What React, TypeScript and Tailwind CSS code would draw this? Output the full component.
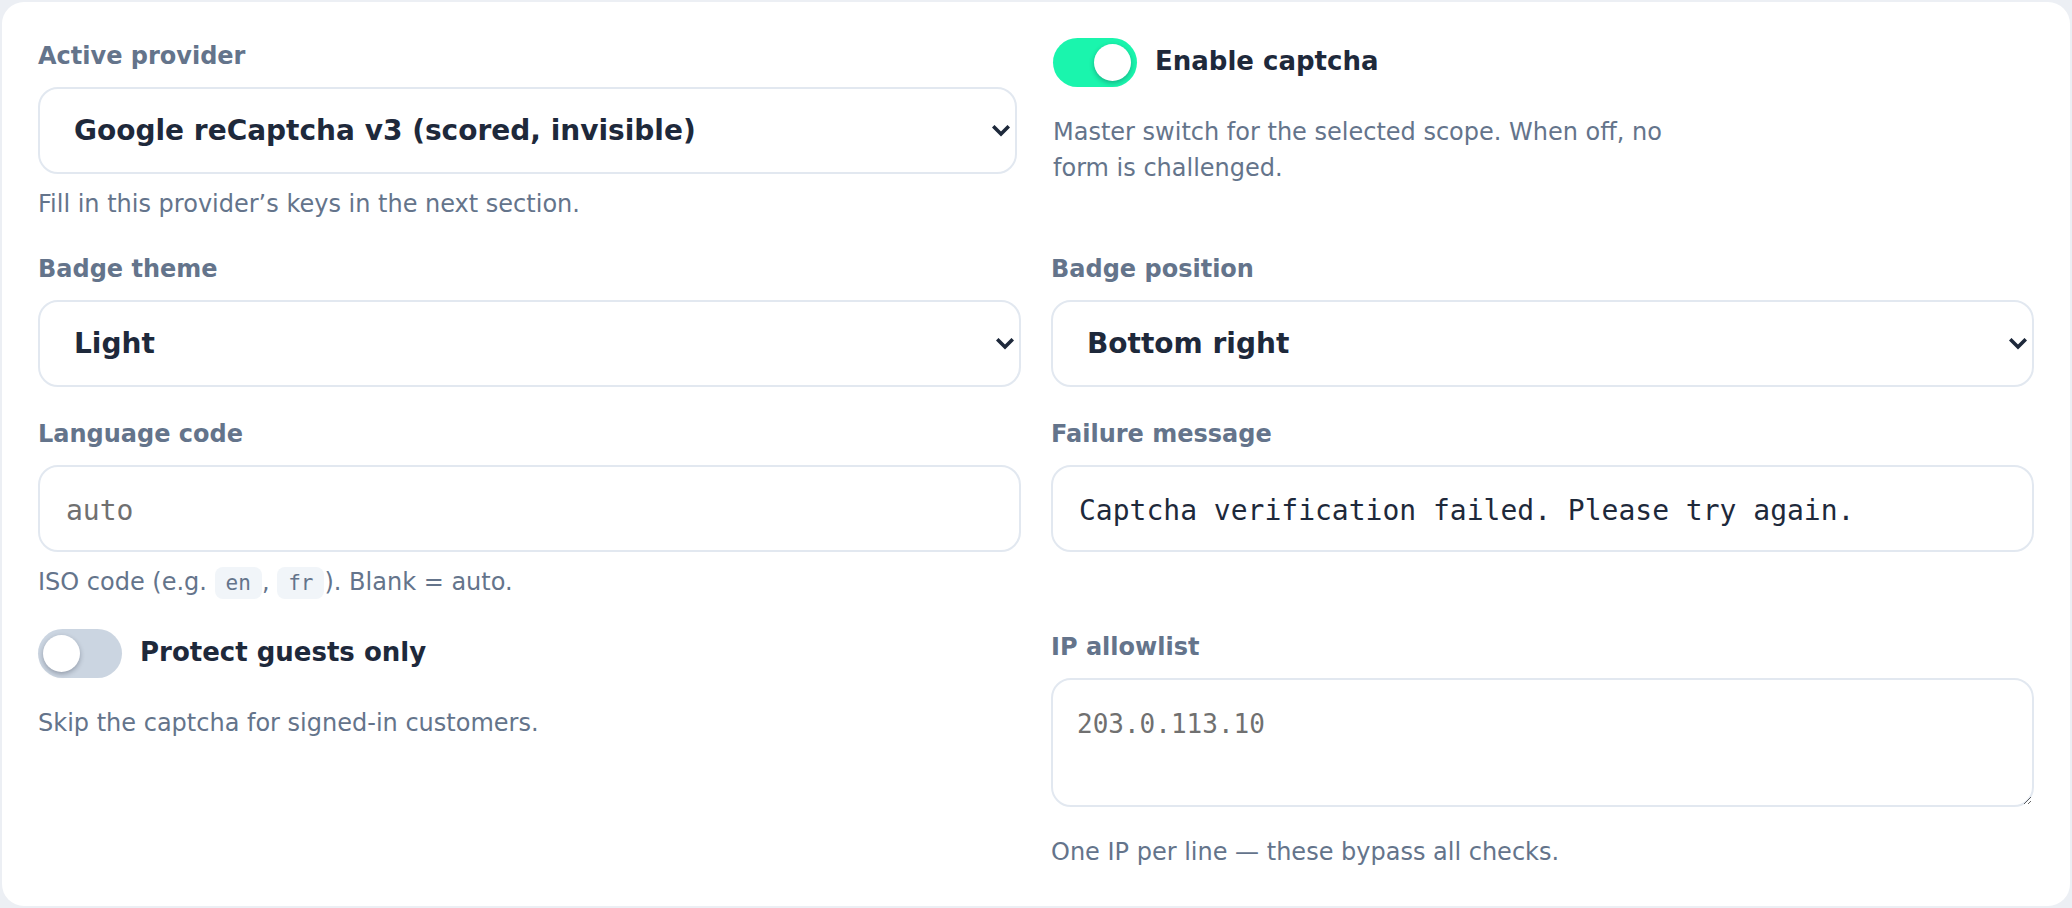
import React from "react";

const sans = { fontFamily: '"DejaVu Sans", "Noto Sans", sans-serif' };
const mono = { fontFamily: '"DejaVu Sans Mono", monospace' };

function Chevron() {
  return (
    <svg width="18" height="12" viewBox="0 0 18 12" className="pointer-events-none absolute right-[5px] top-1/2 -translate-y-1/2">
      <path d="M2.5 2.5 L9 9 L15.5 2.5" fill="none" stroke="#1e293b" strokeWidth="3.6" strokeLinecap="square" />
    </svg>
  );
}

function Label({ children }: { children: React.ReactNode }) {
  return <div className="text-[24px] leading-[30px] font-bold text-[#64748b]">{children}</div>;
}

function Help({ children, className = "" }: { children: React.ReactNode; className?: string }) {
  return <div className={"text-[24px] leading-[36px] text-[#64748b] " + className}>{children}</div>;
}

function Select({ value, className = "" }: { value: string; className?: string }) {
  return (
    <div className={"relative mt-[16px] h-[87px] rounded-[20px] border-2 border-[#e2e8f0] bg-white flex items-center pl-[34px] " + className}>
      <span className="text-[28px] font-bold text-[#1e293b]">{value}</span>
      <Chevron />
    </div>
  );
}

function Toggle({ on }: { on: boolean }) {
  return (
    <div className={"relative h-[49px] w-[84px] shrink-0 rounded-full " + (on ? "bg-[#1af5ad]" : "bg-[#cbd5e1]")}>
      <div
        className={
          "absolute top-[6px] h-[37px] w-[37px] rounded-full bg-white shadow-[0_2px_5px_rgba(15,23,42,0.3)] " +
          (on ? "right-[6px]" : "left-[5px]")
        }
      />
    </div>
  );
}

function Code({ children }: { children: React.ReactNode }) {
  return (
    <span
      className="inline-block rounded-[8px] bg-[#f1f5f9] px-[11px] text-[21px] leading-[32px] text-[#64748b] align-middle"
      style={mono}
    >
      {children}
    </span>
  );
}

export default function App() {
  return (
    <div className="h-[908px] w-full bg-[#eceff4] p-[2px]" style={sans}>
      <div className="h-full w-full rounded-[22px] bg-white px-[36px] pt-[36px]">
        <div className="grid grid-cols-2 gap-x-[30px] gap-y-[32px]">
          {/* Row 1 */}
          <div className="pt-[3px]">
            <Label>Active provider</Label>
            <Select value="Google reCaptcha v3 (scored, invisible)" className="mr-[4px]" />
            <Help className="mt-[12px]">Fill in this provider’s keys in the next section.</Help>
          </div>
          <div className="pl-[2px]">
            <div className="flex items-center gap-[18px]">
              <Toggle on />
              <span className="-mt-[2px] text-[26px] font-bold text-[#1e293b]">Enable captcha</span>
            </div>
            <Help className="mt-[27px] max-w-[640px]">
              Master switch for the selected scope. When off, no form is challenged.
            </Help>
          </div>

          {/* Row 2 */}
          <div>
            <Label>Badge theme</Label>
            <Select value="Light" />
          </div>
          <div>
            <Label>Badge position</Label>
            <Select value="Bottom right" />
          </div>

          {/* Row 3 */}
          <div>
            <Label>Language code</Label>
            <input
              className="mt-[16px] block h-[87px] w-full rounded-[20px] border-2 border-[#e2e8f0] bg-white px-[26px] pt-[3px] text-[28px] text-[#1e293b] placeholder:text-[#707070] outline-none"
              style={mono}
              placeholder="auto"
              readOnly
            />
            <Help className="mt-[12px]">
              ISO code (e.g. <Code>en</Code>, <Code>fr</Code>). Blank = auto.
            </Help>
          </div>
          <div>
            <Label>Failure message</Label>
            <input
              className="mt-[16px] block h-[87px] w-full rounded-[20px] border-2 border-[#e2e8f0] bg-white px-[26px] pt-[3px] text-[28px] text-[#1e293b] outline-none"
              style={mono}
              value="Captcha verification failed. Please try again."
              readOnly
            />
          </div>

          {/* Row 4 */}
          <div className="-mt-[3px]">
            <div className="flex items-center gap-[18px]">
              <Toggle on={false} />
              <span className="-mt-[2px] text-[26px] font-bold text-[#1e293b]">Protect guests only</span>
            </div>
            <Help className="mt-[27px]">Skip the captcha for signed-in customers.</Help>
          </div>
          <div>
            <Label>IP allowlist</Label>
            <textarea
              className="mt-[16px] block h-[129px] w-full rounded-[20px] border-2 border-[#e2e8f0] bg-white px-[24px] pt-[27px] pb-[20px] text-[26px] leading-[34px] text-[#1e293b] placeholder:text-[#707070] outline-none"
              style={mono}
              placeholder="203.0.113.10"
              readOnly
            />
            <Help className="mt-[27px]">One IP per line — these bypass all checks.</Help>
          </div>
        </div>
      </div>
    </div>
  );
}
